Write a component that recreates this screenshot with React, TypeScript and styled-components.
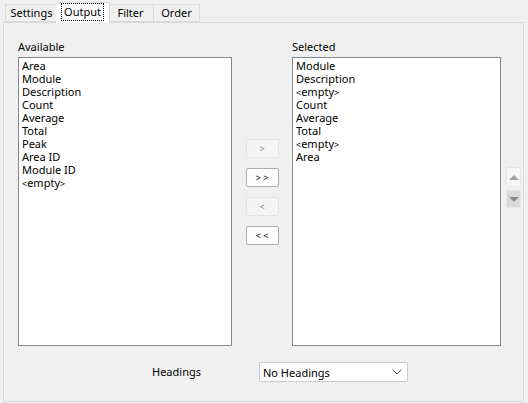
import { FC } from 'react';
import styled, { createGlobalStyle } from 'styled-components';

const GlobalStyle = createGlobalStyle`
	html, body {
		margin: 0;
		padding: 0;
		background: #f0f0f0;
	}
	body {
		font-family: 'Noto Sans', 'Open Sans', sans-serif;
		font-size: 11px;
		color: #000;
	}
`;

const Window = styled.div`
	width: 528px;
	height: 403px;
	background: #f0f0f0;
	overflow: hidden;
`;

const TabStrip = styled.div`
	display: flex;
	align-items: flex-end;
	height: 22px;
	padding-left: 5px;
`;

const Tab = styled.div<{ $active?: boolean; $width: number }>`
	display: flex;
	align-items: center;
	justify-content: center;
	box-sizing: border-box;
	width: ${(p) => p.$width}px;
	height: ${(p) => (p.$active ? 21 : 18)}px;
	margin-bottom: ${(p) => (p.$active ? -1 : 0)}px;
	margin-left: ${(p) => (p.$active ? -2 : 0)}px;
	margin-right: ${(p) => (p.$active ? -2 : 0)}px;
	background: ${(p) => (p.$active ? '#ffffff' : '#f0f0f0')};
	border: 1px solid #d9d9d9;
	border-bottom: ${(p) => (p.$active ? 'none' : '1px solid #d9d9d9')};
	position: relative;
	z-index: ${(p) => (p.$active ? 2 : 1)};
	padding-bottom: ${(p) => (p.$active ? 2 : 0)}px;
	line-height: 14px;
	& + & {
		border-left: ${(p) => (p.$active ? '1px solid #d9d9d9' : 'none')};
	}
`;

const FocusLabel = styled.span`
	outline: 1px dotted #000;
	outline-offset: 1px;
	padding: 0 1px;
`;

const Panel = styled.div`
	box-sizing: border-box;
	width: 521px;
	height: 380px;
	margin-left: 3px;
	border: 1px solid #d9d9d9;
	padding: 17px 0 0 14px;
	display: flex;
	flex-direction: column;
`;

const Lists = styled.div`
	display: grid;
	grid-template-columns: 214px 60px 209px 20px;
	grid-template-rows: 17px 289px;
`;

const Caption = styled.div`
	line-height: 14px;
`;

const ListBox = styled.div`
	box-sizing: border-box;
	border: 1px solid #828790;
	background: #fff;
	padding: 1px 3px;
	line-height: 13px;
	white-space: nowrap;
	overflow: hidden;
`;

const Item = styled.div`
	height: 13px;
`;

const Angle = styled.span`
	font-size: 9px;
`;

const Mover = styled.div`
	display: flex;
	flex-direction: column;
	align-items: center;
	gap: 10px;
	padding-top: 82px;
`;

const MoveButton = styled.button<{ $enabled?: boolean }>`
	box-sizing: border-box;
	width: 33px;
	height: 19px;
	padding: 0;
	font: inherit;
	font-size: 9px;
	line-height: 1;
	color: ${(p) => (p.$enabled ? '#000' : '#838383')};
	background: ${(p) => (p.$enabled ? '#fdfdfd' : '#f5f5f5')};
	border: 1px solid ${(p) => (p.$enabled ? '#adadad' : '#e3e3e3')};
	border-radius: 2px;
	white-space: pre;
`;

const Order = styled.div`
	display: flex;
	flex-direction: column;
	gap: 3px;
	padding: 110px 0 0 5px;
`;

const OrderButton = styled.div<{ $pressed?: boolean }>`
	box-sizing: border-box;
	width: 15px;
	height: ${(p) => (p.$pressed ? 18 : 20)}px;
	display: flex;
	align-items: center;
	justify-content: center;
	background: ${(p) => (p.$pressed ? '#dadada' : '#f7f7f7')};
	border: 1px solid #e6e6e6;
	border-radius: 2px;
`;

const Arrow = styled.span<{ $down?: boolean }>`
	width: 0;
	height: 0;
	border-left: 5px solid transparent;
	border-right: 5px solid transparent;
	${(p) =>
		p.$down
			? 'border-top: 5px solid #8c8c8c;'
			: 'border-bottom: 5px solid #a0a0a0;'}
`;

const HeadingsRow = styled.div`
	display: flex;
	align-items: center;
	margin-top: 16px;
	padding-left: 134px;
`;

const HeadingsLabel = styled.div`
	width: 107px;
	line-height: 14px;
`;

const Combo = styled.div`
	box-sizing: border-box;
	width: 149px;
	height: 20px;
	display: flex;
	align-items: center;
	justify-content: space-between;
	padding: 0 5px 0 3px;
	background: #fff;
	border: 1px solid #cbcbcb;
	border-radius: 2px;
`;

const available = [
	'Area',
	'Module',
	'Description',
	'Count',
	'Average',
	'Total',
	'Peak',
	'Area ID',
	'Module ID',
	'<empty>',
];

const selected = [
	'Module',
	'Description',
	'<empty>',
	'Count',
	'Average',
	'Total',
	'<empty>',
	'Area',
];

const ItemText: FC<{ text: string }> = ({ text }) =>
	text === '<empty>' ? (
		<Item>
			<Angle>&lt;</Angle>empty<Angle>&gt;</Angle>
		</Item>
	) : (
		<Item>{text}</Item>
	);

const App: FC = () => {
	return (
		<Window>
			<GlobalStyle />
			<TabStrip>
				<Tab $width={53}>Settings</Tab>
				<Tab $width={54} $active>
					<FocusLabel>Output</FocusLabel>
				</Tab>
				<Tab $width={46}>Filter</Tab>
				<Tab $width={46}>Order</Tab>
			</TabStrip>
			<Panel>
				<Lists>
					<Caption>Available</Caption>
					<div />
					<Caption>Selected</Caption>
					<div />
					<ListBox>
						{available.map((item, i) => (
							<ItemText key={i} text={item} />
						))}
					</ListBox>
					<Mover>
						<MoveButton>&gt;</MoveButton>
						<MoveButton $enabled>&gt; &gt;</MoveButton>
						<MoveButton>&lt;</MoveButton>
						<MoveButton $enabled>&lt; &lt;</MoveButton>
					</Mover>
					<ListBox>
						{selected.map((item, i) => (
							<ItemText key={i} text={item} />
						))}
					</ListBox>
					<Order>
						<OrderButton>
							<Arrow />
						</OrderButton>
						<OrderButton $pressed>
							<Arrow $down />
						</OrderButton>
					</Order>
				</Lists>
				<HeadingsRow>
					<HeadingsLabel>Headings</HeadingsLabel>
					<Combo>
						<span>No Headings</span>
						<svg width="10" height="6" viewBox="0 0 10 6">
							<path d="M0.5 0.5 L5 5 L9.5 0.5" fill="none" stroke="#555" strokeWidth="1" />
						</svg>
					</Combo>
				</HeadingsRow>
			</Panel>
		</Window>
	);
};

export default App;
